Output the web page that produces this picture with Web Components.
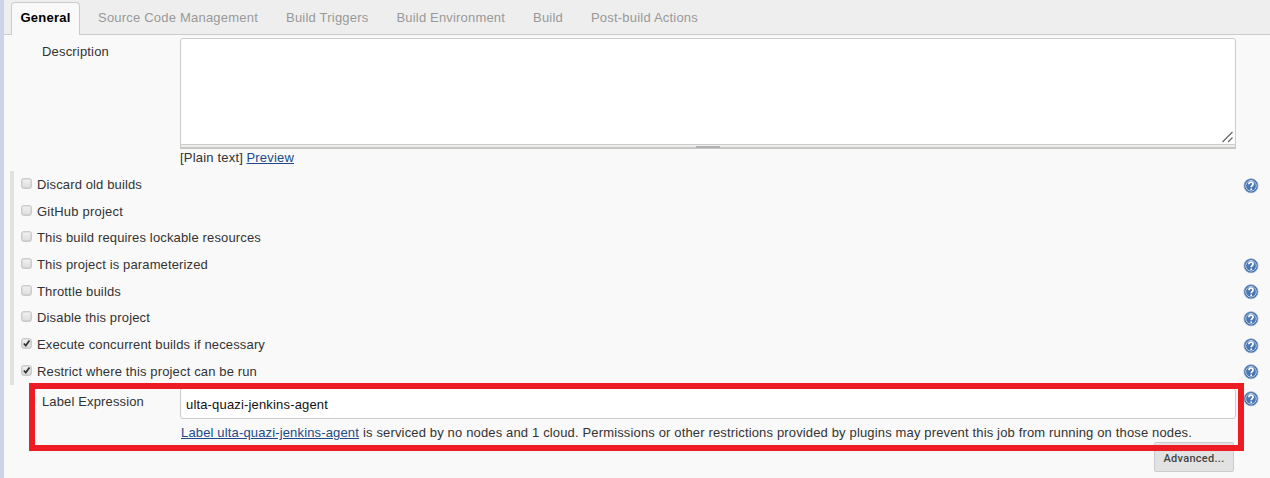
<!DOCTYPE html>
<html lang="en"><head><meta charset="utf-8"><title>Job configuration</title>
<style>html,body{margin:0;height:100%;overflow:hidden;background:#f9f9f9}</style></head>
<body><job-config></job-config>
<script>
// Inline text whose tracking is adjusted to occupy the given width.
class FitText extends HTMLElement {
  connectedCallback() {
    this.attachShadow({mode:'open'}).innerHTML = '<style>:host{display:inline-block;white-space:nowrap;text-decoration:inherit}</style><slot></slot>';
    const n = this.textContent.length;
    this.style.letterSpacing = ((+this.getAttribute('w') - this.getBoundingClientRect().width) / n) + 'px';
  }
}
class HelpIcon extends HTMLElement {
  connectedCallback() {
    this.attachShadow({mode:'open'}).innerHTML = `<style>:host{display:block;width:16px;height:16px}svg{display:block}</style>
    <svg width="16" height="16" viewBox="0 0 16 16"><circle cx="8" cy="7.8" r="7" fill="#3465a4" stroke="#8ba5cb" stroke-width=".8"/>
    <circle cx="8" cy="7.8" r="5.3" fill="#4a76b0" stroke="#c3d1e5" stroke-width="1"/>
    <path d="M5.9 6.2C6 3.4 10.2 3.6 10.1 5.9C10 7.6 8.2 7.7 8.2 9.3" fill="none" stroke="#fff" stroke-width="1.7"/><circle cx="8.2" cy="11.2" r=".9" fill="#fff"/></svg>`;
  }
}
class TabBar extends HTMLElement {
  connectedCallback() {
    this.attachShadow({mode:'open'}).innerHTML = `<style>
    :host{display:flex;box-sizing:border-box;height:35px;padding:2px 0 0 7px;background:#eee;border-bottom:1px solid #ccc;color:#999;font-size:13px}
    div{box-sizing:border-box;height:32px;line-height:31px;margin-right:28px}
    .on{height:33px;width:69px;padding-left:8.5px;margin-right:18px;border:1px solid #ccc;border-bottom:0;border-radius:4px 4px 0 0;background:#f9f9f9;color:#000;font-weight:bold;line-height:29px}</style>
    <div class="on"><fit-text w="50">General</fit-text></div><div><fit-text w="160">Source Code Management</fit-text></div><div><fit-text w="82.5">Build Triggers</fit-text></div><div><fit-text w="108.5">Build Environment</fit-text></div><div><fit-text w="30">Build</fit-text></div><div><fit-text w="107">Post-build Actions</fit-text></div>`;
  }
}
class OptionRow extends HTMLElement {
  connectedCallback() {
    const on = this.hasAttribute('checked'), help = this.hasAttribute('help');
    this.attachShadow({mode:'open'}).innerHTML = `<style>
    :host{display:flex;height:26.7px;box-sizing:border-box;border-left:4px solid #e1e1e1;padding-left:7px}
    svg{margin:7px 5px 0 0;flex:none}.t{line-height:28px;flex:1}help-icon{margin:6.5px 11px 0 0}</style>
    <svg width="11" height="11" viewBox="0 0 11 11"><defs><linearGradient id="g" x2="0" y2="1"><stop stop-color="#f2f2f2"/><stop offset="1" stop-color="#dcdcdc"/></linearGradient></defs>
    <rect x=".8" y=".8" width="9.4" height="9.4" rx="1.5" fill="url(#g)" stroke="#b9b9b9"/>${on?'<path d="M2.8 5.5L4.8 7.6L8.5 2.5" fill="none" stroke="#333" stroke-width="1.8"/>':''}</svg>
    <div class="t"><slot></slot></div>${help?'<help-icon></help-icon>':''}`;
  }
}
class DescriptionField extends HTMLElement {
  connectedCallback() {
    this.attachShadow({mode:'open'}).innerHTML = `<style>
    :host{display:grid;grid-template-columns:138px 1056px;padding:3px 0 0 38px;height:133px}
    .l{padding-top:6px;line-height:15px}
    .a{box-sizing:border-box;height:107px;border:1px solid #ccc;border-radius:3px 3px 0 0;background:#fff;display:flex;justify-content:flex-end;align-items:flex-end}
    .h{height:4px;box-sizing:border-box;border:1px solid #ccc;border-width:0 1px 2px;border-color:#c7c7c4;background:#eee;display:flex;justify-content:center}
    .h i{width:24px;height:2px;background:#b1b1b1;margin-top:1px}
    .p{line-height:15px;padding-top:1px}a{color:#204a87;text-decoration:underline}</style>
    <div class="l"><fit-text w="67">Description</fit-text></div><div><div class="a"><svg width="14" height="14"><path d="M1.5 12L11.5 2M7 12L11.5 7.5" stroke="#666" stroke-width="1.2" fill="none"/></svg></div><div class="h"><i></i></div>
    <div class="p"><fit-text w="63">[Plain text]</fit-text><a style="margin-left:3.5px"><fit-text w="47.5">Preview</fit-text></a></div></div>`;
  }
}
class LabelField extends HTMLElement {
  connectedCallback() {
    this.attachShadow({mode:'open'}).innerHTML = `<style>
    :host{display:grid;grid-template-columns:138px 1056px 1fr;padding-left:38px;height:93px;position:relative}
    .l{padding-top:9px;line-height:15px}
    .i{box-sizing:border-box;height:31px;margin-top:3px;border:1px solid #ccc;border-radius:3px;background:#fff;padding-left:5px;line-height:31px;color:#111}
    .m{line-height:15px;padding:6px 0 1px 1px;white-space:nowrap}a{color:#204a87;text-decoration:underline}
    .b{box-sizing:border-box;width:80px;height:30px;margin:1px 2px 0 auto;border:1px solid #ccc;border-radius:2px;background:#e2e2e2;text-align:center;font:500 11px/19px Roboto,sans-serif;color:#444;padding-top:6px}
    help-icon{margin:6px 0 0 7px}
    .mark{position:absolute;left:25px;top:-2px;width:1215px;height:68px;box-sizing:border-box;border:6px solid #ed1c24;pointer-events:none}</style>
    <div class="l"><fit-text w="102">Label Expression</fit-text></div>
    <div><div class="i"><fit-text w="142">ulta-quazi-jenkins-agent</fit-text></div><div class="m"><a><fit-text w="178">Label ulta-quazi-jenkins-agent</fit-text></a><fit-text w="829" style="margin-left:4px">is serviced by no nodes and 1 cloud. Permissions or other restrictions provided by plugins may prevent this job from running on those nodes.</fit-text></div><div class="b"><fit-text w="61">Advanced...</fit-text></div></div>
    <help-icon></help-icon><div class="mark"></div>`;
  }
}
class JobConfig extends HTMLElement {
  connectedCallback() {
    this.attachShadow({mode:'open'}).innerHTML = `<style>
    :host{display:block;box-sizing:border-box;height:478px;overflow:hidden;border-left:4px solid #cbd5e7;background:#f9f9f9;font:13px "Liberation Sans",Arial,sans-serif;color:#333}
    .rows{height:214px;margin-left:6px}</style>
    <tab-bar></tab-bar><description-field></description-field><div class="rows">
    <option-row help><fit-text w="105">Discard old builds</fit-text></option-row>
    <option-row><fit-text w="86">GitHub project</fit-text></option-row>
    <option-row><fit-text w="224">This build requires lockable resources</fit-text></option-row>
    <option-row help><fit-text w="171">This project is parameterized</fit-text></option-row>
    <option-row help><fit-text w="84">Throttle builds</fit-text></option-row>
    <option-row help><fit-text w="113">Disable this project</fit-text></option-row>
    <option-row checked help><fit-text w="228">Execute concurrent builds if necessary</fit-text></option-row>
    <option-row checked help><fit-text w="220">Restrict where this project can be run</fit-text></option-row></div><label-field></label-field>`;
  }
}
customElements.define('fit-text', FitText);
customElements.define('help-icon', HelpIcon);
customElements.define('tab-bar', TabBar);
customElements.define('option-row', OptionRow);
customElements.define('description-field', DescriptionField);
customElements.define('label-field', LabelField);
customElements.define('job-config', JobConfig);
</script></body></html>
